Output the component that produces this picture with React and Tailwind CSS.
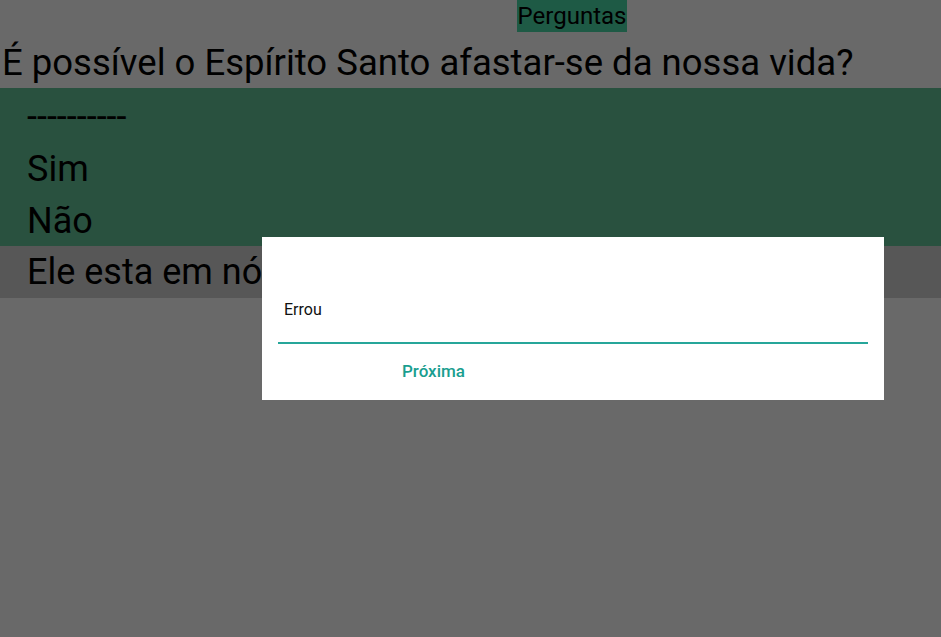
export default function App() {
  const options = ['----------', 'Sim', 'Não'];

  return (
    <div className="relative w-[941px] h-[637px] overflow-hidden bg-[#696969] font-['Roboto',sans-serif] text-black">
      <div className="flex">
        <div className="ml-[517px] bg-[#1e5a45] h-[32px] w-[110px] flex items-center justify-center text-[24px] leading-none">
          Perguntas
        </div>
      </div>
      <div className="h-[56px] flex items-center pl-[2px] text-[36.5px] leading-none pt-[6px]">
        É possível o Espírito Santo afastar-se da nossa vida?
      </div>
      <div className="bg-[#29513f] pt-[3px] h-[158px]">
        {options.map((o) => (
          <div key={o} className="h-[52px] flex items-center pl-[27px] text-[36px] leading-none">
            {o}
          </div>
        ))}
      </div>
      <div className="bg-[#575757] h-[52px] flex items-center pl-[27px] text-[36px] leading-none">
        Ele esta em nós
      </div>

      {/* dialog */}
      <div className="absolute left-[262px] top-[237px] w-[622px] h-[163px] bg-white">
        <div className="pt-[65px] px-[16px]">
          <div className="pl-[6px] text-[16px] leading-none text-[#111]">Errou</div>
          <div className="mt-[24px] h-[2px] bg-[#26a69a]" />
        </div>
        <div className="pl-[140px] pt-[19px] text-[17px] font-medium leading-none text-[#1a9e8f]">
          Próxima
        </div>
      </div>
    </div>
  );
}
